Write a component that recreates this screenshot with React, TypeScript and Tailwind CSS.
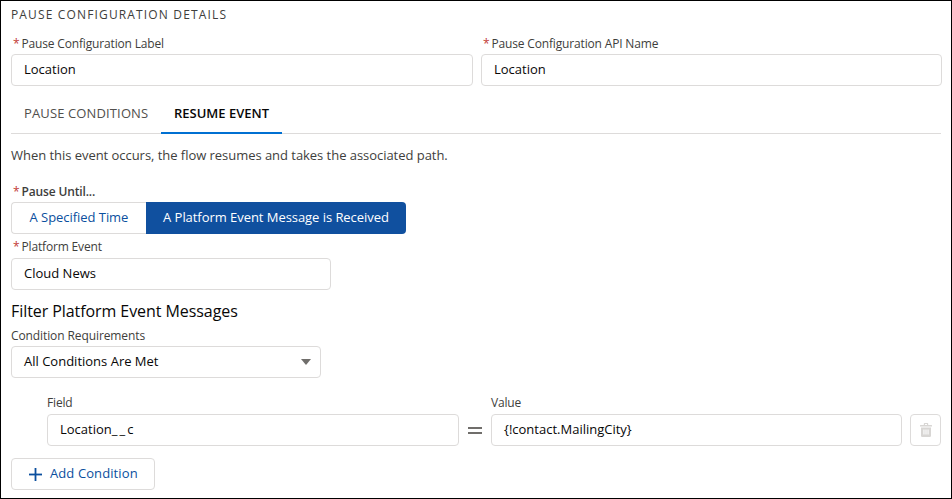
function Label({ text, required, lift }: { text: string; required?: boolean; lift?: boolean }) {
  return (
    <div className={`flex h-[20px] items-center text-[12px] leading-none tracking-[-0.16px] text-[#3e3e3c] ${lift ? 'pb-[2px]' : ''}`}>
      {required && <span className="mr-[2px] ml-[2px] text-[#c23934]">*</span>}
      {text}
    </div>
  )
}

function Input({ value, className }: { value: React.ReactNode; className?: string }) {
  return (
    <div className={`flex h-[32px] items-center rounded-[4px] border border-[#dddbda] bg-white pl-[12px] text-[13px] text-[#080707] ${className ?? ''}`}>
      {value}
    </div>
  )
}

export default function App() {
  return (
    <div
      className="h-[499px] w-[952px] overflow-hidden border border-black bg-white pr-[10px] pl-[10px]"
      style={{ fontFamily: '"Open Sans", "Liberation Sans", sans-serif' }}
    >
      <div className="mt-[5px] flex h-[18px] items-center text-[12px] tracking-[1.15px] text-[#3e3e3c]">
        PAUSE CONFIGURATION DETAILS
      </div>

      <div className="mt-[10px] grid grid-cols-[462px_461px] gap-[8px]">
        <div>
          <Label text="Pause Configuration Label" required />
          <Input value="Location" />
        </div>
        <div>
          <Label text="Pause Configuration API Name" required />
          <Input value="Location" />
        </div>
      </div>

      <div className="mt-[15px] flex h-[33px] border-b border-[#dddbda] pb-[6px] text-[13px]">
        <div className="flex w-[150px] items-center pl-[13px] tracking-[0.13px] text-[#514f4d]">PAUSE CONDITIONS</div>
        <div className="-mb-[7px] flex w-[121px] items-center justify-center border-b-[2px] border-[#0070d2] pb-[6px] font-semibold text-[#080707]">
          RESUME EVENT
        </div>
      </div>

      <p className="mt-[11px] h-[20px] text-[13px] leading-[20px] tracking-[-0.04px] text-[#3e3e3c]">
        When this event occurs, the flow resumes and takes the associated path.
      </p>

      <div className="mt-[17px] flex h-[20px] items-center pb-[1px] text-[12px] font-semibold tracking-[-0.15px] text-[#3e3e3c]">
        <span className="mr-[2px] ml-[2px] font-normal text-[#c23934]">*</span>
        Pause Until...
      </div>
      <div className="flex h-[32px] w-[395px] text-[13px] font-medium tracking-[-0.05px]">
        <div className="flex w-[135px] items-center justify-center rounded-l-[4px] border border-r-0 border-[#dddbda] text-[#0b4f9e]">
          A Specified Time
        </div>
        <div className="flex flex-1 items-center justify-center rounded-r-[4px] bg-[#10509f] text-white">
          A Platform Event Message is Received
        </div>
      </div>

      <div className="mt-[4px]">
        <Label text="Platform Event" required lift />
        <Input value="Cloud News" className="w-[320px]" />
      </div>

      <h2 className="mt-[10px] h-[22px] text-[16px] leading-[22px] tracking-[-0.07px] text-[#080707]">Filter Platform Event Messages</h2>

      <div className="mt-[4px] flex h-[20px] items-center text-[12px] tracking-[-0.1px] text-[#3e3e3c]">Condition Requirements</div>
      <div className="relative flex h-[32px] w-[310px] items-center rounded-[4px] border border-[#dddbda] pl-[12px] text-[13px] text-[#080707]">
        All Conditions Are Met
        <span className="absolute top-[12px] right-[9px] h-0 w-0 border-t-[6px] border-r-[5px] border-l-[5px] border-t-[#706e6b] border-r-transparent border-l-transparent" />
      </div>

      <div className="mt-[16px] flex items-end pl-[36px]">
        <div className="w-[412px]">
          <Label text="Field" lift />
          <Input value={<>Location<span className="tracking-[2px]">__</span>c</>} />
        </div>
        <div className="flex h-[32px] w-[32px] flex-col items-center justify-center gap-[3px]">
          <span className="h-[2px] w-[14px] bg-[#706e6b]" />
          <span className="h-[2px] w-[14px] bg-[#706e6b]" />
        </div>
        <div className="w-[411px]">
          <Label text="Value" lift />
          <Input value="{!contact.MailingCity}" />
        </div>
        <div className="ml-[8px] flex h-[32px] w-[31px] items-center justify-center rounded-[4px] border border-[#dddbda]">
          <svg width="12" height="14" viewBox="0 0 12 14" fill="#d8d6d4">
            <path d="M4.5 0h3a.7.7 0 0 1 .7.7V2h3.3a.5.5 0 0 1 .5.5V3.4H0v-.9A.5.5 0 0 1 .5 2h3.3V.7A.7.7 0 0 1 4.5 0zM5 1v1h2V1z" fillRule="evenodd" />
            <path d="M1 4.5h10v8.3A1.2 1.2 0 0 1 9.8 14H2.2A1.2 1.2 0 0 1 1 12.8zM3.4 6.5v5h1.1v-5zM5.45 6.5v5h1.1v-5zM7.5 6.5v5h1.1v-5z" fillRule="evenodd" />
          </svg>
        </div>
      </div>

      <div className="mt-[12px] flex h-[32px] w-[144px] items-center rounded-[4px] border border-[#dddbda] pl-[17px] text-[13px] tracking-[0.1px] text-[#0b4f9e]">
        <svg width="13" height="13" viewBox="0 0 13 13" fill="#0b4f9e" className="mr-[8px]">
          <rect x="5.6" y="0" width="1.8" height="13" />
          <rect x="0" y="5.6" width="13" height="1.8" />
        </svg>
        Add Condition
      </div>
    </div>
  )
}
